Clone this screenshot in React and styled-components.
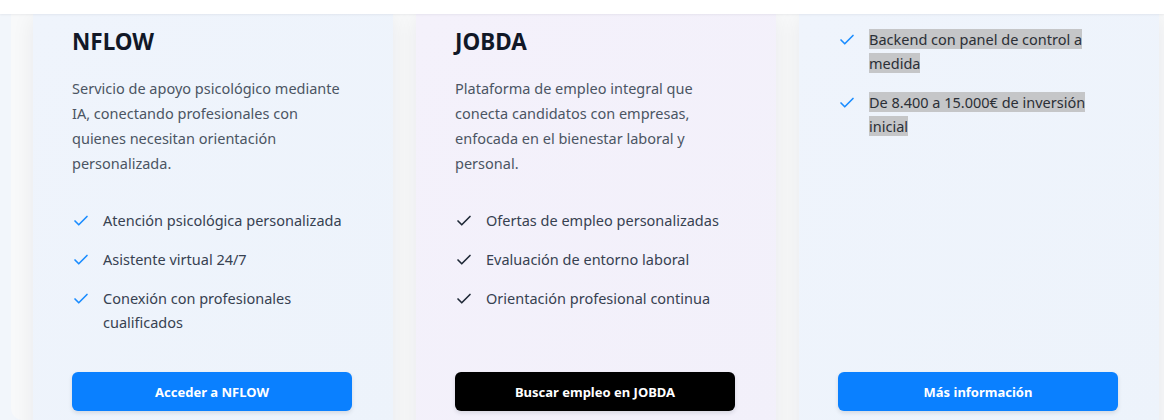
import React from 'react'
import styled, { createGlobalStyle } from 'styled-components'
import { Check } from 'lucide-react'

const GlobalStyle = createGlobalStyle`
  html, body {
    margin: 0;
    padding: 0;
    height: 100%;
    overflow: hidden;
    background: #f2f6fb;
  }
  * {
    box-sizing: border-box;
  }
`

const Page = styled.div`
  font-family: 'Noto Sans', 'Open Sans', sans-serif;
  height: 420px;
  overflow: hidden;
  display: flex;
  flex-direction: column;
`

const TopBar = styled.header`
  height: 14px;
  flex: none;
  background: #ffffff;
  box-shadow: 0 1px 2px rgba(15, 23, 42, 0.06);
  position: relative;
  z-index: 2;
`

const Stage = styled.div`
  flex: 1;
  display: flex;
  padding-left: 11px;
  min-height: 0;
`

const Panel = styled.section`
  flex: 1;
  display: grid;
  grid-template-columns: repeat(3, 360px);
  gap: 23px;
  padding: 0 0 0 22px;
  background: #f8f9fa;
  border-bottom-left-radius: 12px;
`

const Card = styled.article`
  display: flex;
  flex-direction: column;
  height: 437px;
  padding: ${p => p.$top}px 41px 40px 39px;
  background: ${p => p.$tint === 'violet'
    ? 'linear-gradient(135deg, #f4f1fb 0%, #f2f0fa 100%)'
    : 'linear-gradient(135deg, #eff4fc 0%, #edf3fb 100%)'};
  box-shadow: 0 4px 22px rgba(15, 23, 42, 0.07);
`

const Title = styled.h3`
  margin: 0 0 20px;
  font-size: 22.5px;
  line-height: 28px;
  font-weight: 700;
  color: #111827;
`

const Description = styled.p`
  margin: 0 0 32px;
  font-size: 14.5px;
  line-height: 25px;
  color: #4b5563;
`

const Features = styled.ul`
  list-style: none;
  margin: 0;
  padding: 0;
  display: flex;
  flex-direction: column;
  gap: 15px;
`

const Feature = styled.li`
  display: flex;
  align-items: flex-start;
  gap: 13px;
  font-size: 14.5px;
  line-height: 24px;
  color: #374151;

  svg {
    flex: none;
    margin-top: 4px;
    color: ${p => (p.$dark ? '#1f2937' : '#1a8cff')};
  }
`

const Selected = styled.span`
  background: #c5c6c8;
  color: #2b2f36;
`

const ActionButton = styled.button`
  margin-top: auto;
  height: 39px;
  width: 100%;
  border: none;
  border-radius: 6px;
  font-family: inherit;
  font-size: 13px;
  font-weight: 700;
  color: #ffffff;
  background: ${p => (p.$dark ? '#000000' : '#0a80ff')};
  box-shadow: 0 2px 4px rgba(15, 23, 42, 0.12);
  cursor: pointer;
`

const projects = [
  {
    title: 'NFLOW',
    tint: 'blue',
    description:
      'Servicio de apoyo psicológico mediante IA, conectando profesionales con quienes necesitan orientación personalizada.',
    features: [
      'Atención psicológica personalizada',
      'Asistente virtual 24/7',
      'Conexión con profesionales cualificados'
    ],
    cta: 'Acceder a NFLOW'
  },
  {
    title: 'JOBDA',
    tint: 'violet',
    dark: true,
    description:
      'Plataforma de empleo integral que conecta candidatos con empresas, enfocada en el bienestar laboral y personal.',
    features: [
      'Ofertas de empleo personalizadas',
      'Evaluación de entorno laboral',
      'Orientación profesional continua'
    ],
    cta: 'Buscar empleo en JOBDA'
  }
]

const extras = [
  'Backend con panel de control a medida',
  'De 8.400 a 15.000€ de inversión inicial'
]

export default function App () {
  return (
    <Page>
      <GlobalStyle />
      <TopBar />
      <Stage>
        <Panel>
          {projects.map(p => (
            <Card key={p.title} $tint={p.tint} $top={14}>
              <Title>{p.title}</Title>
              <Description>{p.description}</Description>
              <Features>
                {p.features.map(f => (
                  <Feature key={f} $dark={p.dark}>
                    <Check size={18} strokeWidth={2.2} />
                    <span>{f}</span>
                  </Feature>
                ))}
              </Features>
              <ActionButton $dark={p.dark}>{p.cta}</ActionButton>
            </Card>
          ))}
          <Card $tint='blue' $top={13}>
            <Features>
              {extras.map(f => (
                <Feature key={f}>
                  <Check size={18} strokeWidth={2.2} />
                  <span><Selected>{f}</Selected></span>
                </Feature>
              ))}
            </Features>
            <ActionButton>Más información</ActionButton>
          </Card>
        </Panel>
      </Stage>
    </Page>
  )
}
